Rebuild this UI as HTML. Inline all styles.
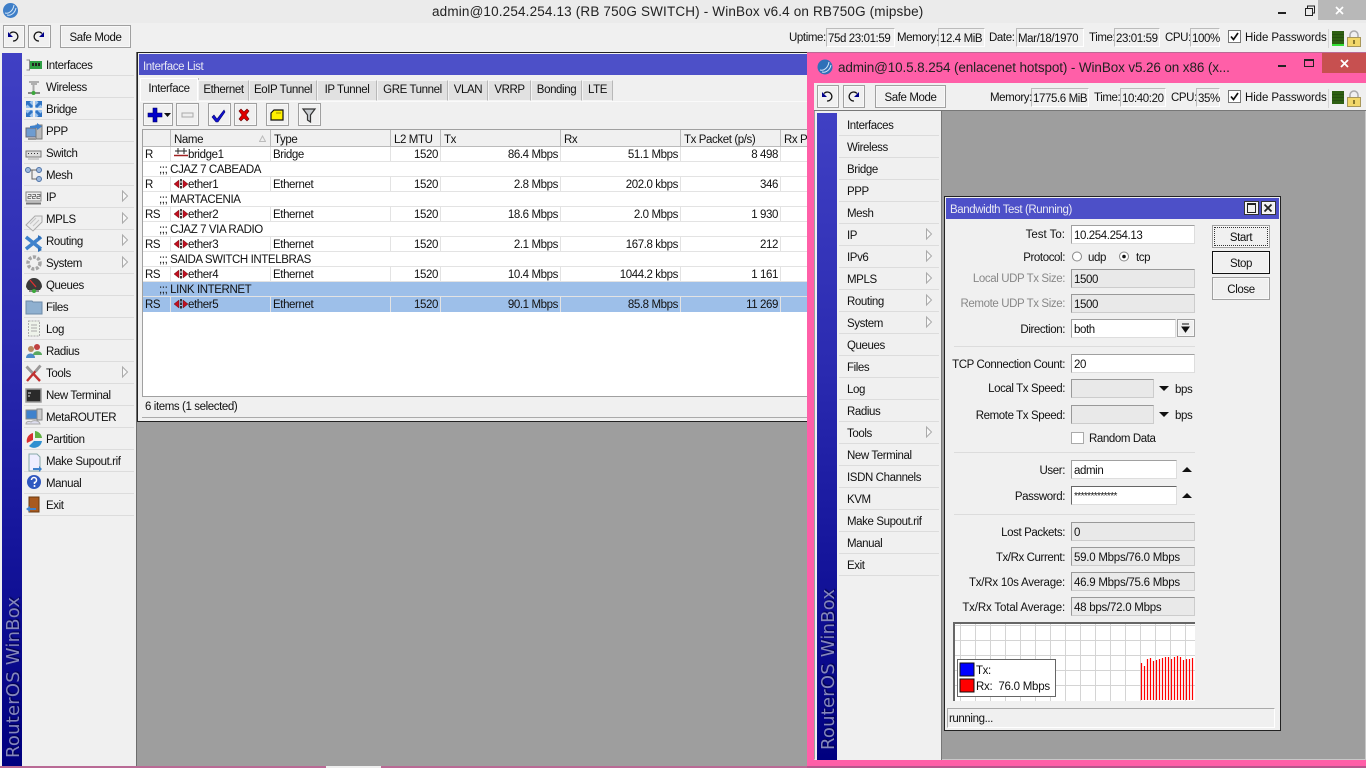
<!DOCTYPE html>
<html><head><meta charset="utf-8"><title>WinBox</title>
<style>
html,body{margin:0;padding:0;width:1366px;height:768px;overflow:hidden;background:#9e9e9e}
body{position:relative;font:11.5px/16px "Liberation Sans",sans-serif;color:#111;letter-spacing:-.4px}
div,svg{position:absolute}
.t{white-space:nowrap;height:14px}
.r{text-align:right}
.b{box-sizing:border-box;background:#f0f0f0;border:1px solid #a0a0a0;text-align:center;white-space:nowrap;box-shadow:inset 0 0 0 1px #f8f8f8}
.f{box-sizing:border-box;background:#f0f0f0;border:1px solid #fff;border-top-color:#bbb;border-left-color:#bbb;height:19px;padding:2px 1px;white-space:nowrap}
.i{box-sizing:border-box;background:#fff;border:1px solid #a0a0a0;border-right-color:#ddd;border-bottom-color:#ddd;height:19px;padding:2px 2px;white-space:nowrap}
.d{box-sizing:border-box;background:#e9e9e9;border:1px solid #999;border-right-color:#ccc;border-bottom-color:#ccc;height:19px;padding:2px 2px;white-space:nowrap}
.s{height:1px;background:#dcdcdc}
.g{color:#888}
.tab{box-sizing:border-box;background:#e1e1e1;border:1px solid #f4f4f4;border-right-color:#b8b8b8;top:80px;height:21px;text-align:center;padding-top:1px;white-space:nowrap}
.h{top:130px;height:17px;box-sizing:border-box;background:#f0f0f0;border-right:1px solid #bbb;padding:2px 3px;white-space:nowrap}
.c{height:14px;white-space:nowrap}
.ln{left:143px;width:664px;height:1px;background:#e3e3e3}
.v{top:147px;height:165px;width:1px;background:#e3e3e3}
.w{font-size:13.5px;letter-spacing:.16px;color:#222;line-height:18px;white-space:nowrap}
.rb{font:18px/20px "DejaVu Sans",sans-serif;color:#8486bc;letter-spacing:.2px;text-shadow:1px 1px 1px #00004a;white-space:nowrap;transform:rotate(-90deg);transform-origin:0 0}
</style></head><body>

<!-- main title bar -->
<div style="left:0;top:0;width:1366px;height:23px;background:#ebebeb;border-bottom:1px solid #d8d8d8"></div>
<svg style="left:2px;top:2px" width="17" height="17" viewBox="0 0 17 17"><circle cx="8.5" cy="8.5" r="7.5" fill="#3f7fc8"/><path d="M3 11C7 12 11 9 12 3M5 13C9 14 13 11 14 6" stroke="#d5e7f7" fill="none"/></svg>
<div class="w" style="left:432px;top:3px">admin@10.254.254.13 (RB 750G SWITCH) - WinBox v6.4 on RB750G (mipsbe)</div>
<div style="left:1318px;top:0;width:48px;height:20px;background:#b8b8b8"></div>
<svg style="left:1278px;top:5px" width="84" height="12" viewBox="0 0 84 12"><rect x="0" y="7" width="8" height="2" fill="#222"/><path d="M27.5 3.5h7v7h-7z M29.5 3v-2h7v7h-2" stroke="#222" fill="none"/><path d="M58 2l7 7M65 2l-7 7" stroke="#fff" stroke-width="1.7"/></svg>

<!-- main toolbar -->
<div style="left:0;top:23px;width:1366px;height:29px;background:#f0f0f0"></div>
<div class="b" style="left:3px;top:25px;width:22px;height:23px"></div>
<div class="b" style="left:28px;top:25px;width:23px;height:23px"></div>
<svg style="left:7px;top:30px" width="40" height="13" viewBox="0 0 40 13"><path d="M3 3.500A4.500 4.500 0 1 1 6 11" stroke="#111" stroke-width="1.300" fill="none"/><path d="M1 2v5h5z" fill="#00008a"/><path d="M35 3.500A4.500 4.500 0 1 0 32 11" stroke="#111" stroke-width="1.300" fill="none"/><path d="M37 2v5h-5z" fill="#00008a"/></svg>
<div class="b" style="left:60px;top:25px;width:71px;height:23px;padding-top:4px">Safe Mode</div>
<div class="f" style="left:826px;top:28px;width:69px">75d 23:01:59</div><div class="t" style="left:789px;top:30px">Uptime:</div>
<div class="f" style="left:938px;top:28px;width:47px">12.4 MiB</div><div class="t" style="left:897px;top:30px">Memory:</div>
<div class="t" style="left:989px;top:30px">Date:</div><div class="f" style="left:1016px;top:28px;width:68px">Mar/18/1970</div>
<div class="t" style="left:1089px;top:30px">Time:</div><div class="f" style="left:1114px;top:28px;width:46px">23:01:59</div>
<div class="t" style="left:1165px;top:30px">CPU:</div><div class="f" style="left:1190px;top:28px;width:30px">100%</div>
<svg style="left:1228px;top:30px" width="13" height="13" viewBox="0 0 13 13"><rect x=".5" y=".5" width="12" height="12" fill="#fff" stroke="#777"/><path d="M3 6.500l2.500 3L10 3" stroke="#111" stroke-width="1.700" fill="none"/></svg>
<div class="t" style="left:1245px;top:30px;letter-spacing:-.1px">Hide Passwords</div>
<div style="left:1328px;top:29px;width:1px;height:19px;background:#d5d5d5"></div>
<svg style="left:1332px;top:30px" width="30" height="17" viewBox="0 0 30 17"><rect x="0" y="1" width="12" height="13" fill="#2e5f12"/><path d="M0 4.500h12M0 7.500h12M0 10.500h12" stroke="#264f10"/><rect x="0" y="14" width="12" height="2" fill="#35e035"/><path d="M18 8V5a4 4 0 0 1 8 0v3" stroke="#a9a9a9" stroke-width="1.500" fill="none"/><rect x="15.500" y="7.500" width="13" height="9" fill="#f2d76a" stroke="#a8975a"/><rect x="21" y="10" width="2" height="4" fill="#8a7a30"/></svg>

<!-- main sidebar -->
<div style="left:0;top:52px;width:137px;height:714px;background:#f0f0f0"></div>
<div style="left:2px;top:53px;width:20px;height:713px;background:linear-gradient(#4040c4,#2a2ab0 40%,#14149a 70%,#00007f)"></div>
<div style="left:136px;top:52px;width:1px;height:714px;background:#6d6d6d"></div>
<div class="rb" style="left:4px;top:758px">RouterOS WinBox</div>
<div style="left:0;top:766px;width:807px;height:2px;background:#b96a95"></div>
<div style="left:326px;top:766px;width:55px;height:2px;background:#eee"></div>

<div class="t" style="left:46px;top:58px">Interfaces</div>
<div class="t" style="left:46px;top:80px">Wireless</div>
<div class="t" style="left:46px;top:102px">Bridge</div>
<div class="t" style="left:46px;top:124px">PPP</div>
<div class="t" style="left:46px;top:146px">Switch</div>
<div class="t" style="left:46px;top:168px">Mesh</div>
<div class="t" style="left:46px;top:190px">IP</div>
<div class="t" style="left:46px;top:212px">MPLS</div>
<div class="t" style="left:46px;top:234px">Routing</div>
<div class="t" style="left:46px;top:256px">System</div>
<div class="t" style="left:46px;top:278px">Queues</div>
<div class="t" style="left:46px;top:300px">Files</div>
<div class="t" style="left:46px;top:322px">Log</div>
<div class="t" style="left:46px;top:344px">Radius</div>
<div class="t" style="left:46px;top:366px">Tools</div>
<div class="t" style="left:46px;top:388px">New Terminal</div>
<div class="t" style="left:46px;top:410px">MetaROUTER</div>
<div class="t" style="left:46px;top:432px">Partition</div>
<div class="t" style="left:46px;top:454px">Make Supout.rif</div>
<div class="t" style="left:46px;top:476px">Manual</div>
<div class="t" style="left:46px;top:498px">Exit</div>
<div class="s" style="left:24px;top:75px;width:110px"></div><div class="s" style="left:24px;top:97px;width:110px"></div><div class="s" style="left:24px;top:119px;width:110px"></div><div class="s" style="left:24px;top:141px;width:110px"></div><div class="s" style="left:24px;top:163px;width:110px"></div><div class="s" style="left:24px;top:185px;width:110px"></div><div class="s" style="left:24px;top:207px;width:110px"></div><div class="s" style="left:24px;top:229px;width:110px"></div><div class="s" style="left:24px;top:251px;width:110px"></div><div class="s" style="left:24px;top:273px;width:110px"></div><div class="s" style="left:24px;top:295px;width:110px"></div><div class="s" style="left:24px;top:317px;width:110px"></div><div class="s" style="left:24px;top:339px;width:110px"></div><div class="s" style="left:24px;top:361px;width:110px"></div><div class="s" style="left:24px;top:383px;width:110px"></div><div class="s" style="left:24px;top:405px;width:110px"></div><div class="s" style="left:24px;top:427px;width:110px"></div><div class="s" style="left:24px;top:449px;width:110px"></div><div class="s" style="left:24px;top:471px;width:110px"></div><div class="s" style="left:24px;top:493px;width:110px"></div><div class="s" style="left:24px;top:515px;width:110px"></div>

<!-- main menu icons -->
<svg style="left:25px;top:55px" width="18" height="460" viewBox="0 0 18 460">
<!-- interfaces -->
<path d="M1.500 5h3v10h-3" stroke="#8a8a8a" fill="none"/><rect x="5" y="6" width="12" height="8" fill="#2f9f45"/><path d="M7 8h2v3H7zM10 8h2v3h-2zM13 8h2v3h-2z" fill="#222"/>
<!-- wireless -->
<path d="M4 27h10M6 29h6" stroke="#999" stroke-width="1.500"/><path d="M8.500 30v7" stroke="#aaa" stroke-width="2"/><path d="M3 38h12" stroke="#666" stroke-width="1.500"/><circle cx="8.500" cy="38" r="2" fill="#3aa83a"/>
<!-- bridge -->
<path d="M1 46h7v7H1zM10 46h7v7h-7zM1 55h7v7H1zM10 55h7v7h-7z" fill="#9cc4ee"/><path d="M1 46h5l-1.500 1.500L8 51l-2 2-3.500-3.500L1 51zM17 46h-5l1.500 1.500L10 51l2 2 3.500-3.500L17 51zM1 62h5l-1.500-1.500L8 57l-2-2-3.500 3.500L1 57zM17 62h-5l1.500-1.500L10 57l2-2 3.500 3.500L17 57z" fill="#2f74c4"/>
<!-- ppp -->
<rect x="1" y="73" width="11" height="9" fill="#6e9cd0" stroke="#667"/><rect x="11" y="70" width="6" height="14" fill="#bbb" stroke="#777"/><path d="M5 71l7-1v-2l5 3.500-5 3.500v-2H5z" fill="#3f82cc"/><rect x="3" y="83" width="8" height="2" fill="#999"/>
<!-- switch -->
<rect x="1" y="96" width="15" height="6" fill="#ddd" stroke="#777"/><path d="M3 98.500h1M6 98.500h1M9 98.500h1M12 98.500h1" stroke="#333"/><path d="M3 104h11" stroke="#aaa"/>
<!-- mesh -->
<circle cx="3" cy="115" r="2.500" fill="#9db9dd" stroke="#4d72a8"/><circle cx="14" cy="115" r="2.500" fill="#9db9dd" stroke="#4d72a8"/><circle cx="14" cy="124" r="2.500" fill="#9db9dd" stroke="#4d72a8"/><path d="M5 115h7M7 115v9h5" stroke="#666" fill="none"/>
<!-- ip -->
<rect x="1" y="137" width="15" height="9" fill="#eee" stroke="#888"/><path d="M1 148.500h15" stroke="#777" stroke-width="2"/><path d="M3 139.500h3v2h-3v2h3M7.500 139.500h3v2h-3v2h3M12 139.500h3v2h-3v2h3" stroke="#555" fill="none" stroke-width=".8"/>
<!-- mpls -->
<path d="M1 170l9-9h7v6l-9 9z" fill="#ececec" stroke="#aaa"/><path d="M5 169l6-6M8 171l6-6" stroke="#c4c4c4"/>
<!-- routing -->
<path d="M1 182l15 12M1 194l15-12" stroke="#3f82cc" stroke-width="3.500"/><path d="M13 180l4 3-4 2zM13 192l4 3-4 2z" fill="#2e6fb8"/>
<!-- system -->
<circle cx="9" cy="208" r="6" fill="none" stroke="#a5a5a5" stroke-width="3.500" stroke-dasharray="3 1.500"/>
<!-- queues -->
<path d="M1 232a8 9 0 0 1 16 0l-2 3H3z" fill="#3a3a3a"/><path d="M5 225l6 7" stroke="#e03030" stroke-width="1.300"/><path d="M4 236h10" stroke="#666" stroke-width="1.500"/><circle cx="9" cy="236" r="2" fill="#3aa83a"/>
<!-- files -->
<path d="M1 246h6l1 1h9v12H1z" fill="#8fb0d0" stroke="#6d8aa8"/>
<!-- log -->
<rect x="3.500" y="266" width="11" height="15" fill="#eef3ea" stroke="#aaa" stroke-dasharray="2 1"/><path d="M6 270h6M6 273h6M6 276h6" stroke="#aaa"/>
<!-- radius -->
<circle cx="6" cy="294" r="3" fill="#b88a60"/><path d="M1 303c0-6 9-6 9 0z" fill="#4d8ac8"/><circle cx="12" cy="292" r="3" fill="#c04040"/><path d="M8 300c0-5 9-5 9 0z" fill="#5aa860"/>
<!-- tools -->
<path d="M2 312l13 14" stroke="#c03030" stroke-width="2.400"/><path d="M15 311l-13 15" stroke="#c03030" stroke-width="2.400"/><path d="M1.500 311.500l6 6.500M15.500 310.500l-5 6" stroke="#999" stroke-width="2.800"/>
<!-- terminal -->
<rect x="1" y="334" width="15" height="13" fill="#2a2a2a" stroke="#999" stroke-width="1.500"/><path d="M3 338h3M3 341h2" stroke="#ddd"/>
<!-- metarouter -->
<rect x="1" y="355" width="11" height="9" fill="#3f82cc" stroke="#888"/><rect x="12" y="354" width="5" height="11" fill="#ccc" stroke="#888"/><path d="M1 369c0-3 4-3 5-2 2-2 8-2 9 2z" fill="#dde" stroke="#aaa"/>
<!-- partition -->
<path d="M8 378v7l-6 3a8 8 0 0 1 6-10z" fill="#d83030"/><path d="M10 376a8 8 0 0 1 7 7h-7z" fill="#60b040"/><path d="M9 386h8a8 8 0 0 1-13 5z" fill="#3090d0"/>
<!-- supout -->
<path d="M4 399h8l3 3v14H4z" fill="#eef" stroke="#8aa"/><path d="M8 413h6v-2l3 3-3 3v-2H8z" fill="#3f82cc"/>
<!-- manual -->
<circle cx="9" cy="427" r="7" fill="#2f58c0"/><path d="M6.500 425a2.500 2.500 0 1 1 3 2.500v1.500" stroke="#fff" stroke-width="1.500" fill="none"/><circle cx="9.500" cy="431" r="1" fill="#fff"/>
<!-- exit -->
<rect x="4" y="442" width="10" height="15" fill="#a85a20" stroke="#6a3a10"/><path d="M1 454l4-3v2h6v2H5v2z" fill="#3f82cc"/>
</svg>
<svg style="left:121px;top:190px" width="9" height="190" viewBox="0 0 9 190"><path d="M1.500 1v10l5-5zM1.500 23v10l5-5zM1.500 45v10l5-5zM1.500 67v10l5-5zM1.500 177v10l5-5z" fill="#f8f8f8" stroke="#aaa"/></svg>

<!-- interface list -->
<div style="left:137px;top:52px;width:672px;height:370px;background:#f0f0f0;border:1px solid #222;box-sizing:border-box"></div>
<div style="left:139px;top:54px;width:668px;height:21px;background:#4d50c8"></div>
<div class="t" style="left:143px;top:59px;color:#e8e8f4">Interface List</div>
<div style="left:140px;top:78px;width:58px;height:24px;background:#f0f0f0;border:1px solid #fff;border-bottom:0;box-sizing:border-box;text-align:center;padding-top:2px;box-shadow:1px 0 0 #bbb">Interface</div>
<div class="tab" style="left:198px;width:51px">Ethernet</div>
<div class="tab" style="left:249px;width:68px">EoIP Tunnel</div>
<div class="tab" style="left:317px;width:60px">IP Tunnel</div>
<div class="tab" style="left:377px;width:71px">GRE Tunnel</div>
<div class="tab" style="left:448px;width:40px">VLAN</div>
<div class="tab" style="left:488px;width:43px">VRRP</div>
<div class="tab" style="left:531px;width:51px">Bonding</div>
<div class="tab" style="left:582px;width:31px">LTE</div>
<div style="left:140px;top:101px;width:667px;height:1px;background:#fafafa"></div>
<div class="b" style="left:143px;top:103px;width:30px;height:23px"></div>
<div class="b" style="left:176px;top:103px;width:23px;height:23px"></div>
<div class="b" style="left:208px;top:103px;width:23px;height:23px"></div>
<div class="b" style="left:234px;top:103px;width:23px;height:23px"></div>
<div class="b" style="left:266px;top:103px;width:23px;height:23px"></div>
<div class="b" style="left:298px;top:103px;width:23px;height:23px"></div>
<svg style="left:143px;top:103px" width="180" height="24" viewBox="0 0 180 24">
<path d="M10 5h4v5h5v4h-5v5h-4v-5H5v-4h5z" fill="#0000c8" stroke="#00005a" stroke-width=".6"/><path d="M21 10h7l-3.500 4z" fill="#111"/>
<rect x="39" y="10" width="11" height="4" fill="#eee" stroke="#aaa"/>
<path d="M71 12l3 4 7-9 1 2-7 10h-2l-4-5z" fill="#1010d0" stroke="#00006a" stroke-width=".6"/>
<path d="M96 8l2-2 3 3 3-3 2 2-3 4 3 4-2 2-3-3-3 3-2-2 3-4z" fill="#e00000" stroke="#600" stroke-width=".6"/>
<path d="M128 10l3-3h9v10h-12z" fill="#fff000" stroke="#111" stroke-width="1.200"/><path d="M133 10h5" stroke="#a09000"/>
<path d="M160 6h12l-4.500 6v7l-3-2v-5z" fill="#c8ccd0" stroke="#333" stroke-width="1.200"/>
</svg>

<!-- table -->
<div style="left:142px;top:129px;width:665px;height:268px;background:#fff;border:1px solid #a0a0a0;border-right:0;box-sizing:border-box"></div>
<div style="left:143px;top:297px;width:664px;height:15px;background:#9dbfe9"></div>
<div class="h" style="left:143px;width:28px"></div>
<div class="h" style="left:171px;width:100px">Name</div>
<div class="h" style="left:271px;width:120px">Type</div>
<div class="h" style="left:391px;width:50px">L2 MTU</div>
<div class="h" style="left:441px;width:120px">Tx</div>
<div class="h" style="left:561px;width:120px">Rx</div>
<div class="h" style="left:681px;width:100px">Tx Packet (p/s)</div>
<div class="h" style="left:781px;width:26px;overflow:hidden;border:0">Rx Pack</div>
<svg style="left:259px;top:135px" width="7" height="7"><path d="M.5 6.500L3.500 1l3 5.500z" fill="#eee" stroke="#bbb"/></svg>
<div class="v" style="left:170px"></div><div class="v" style="left:270px"></div><div class="v" style="left:390px"></div><div class="v" style="left:440px"></div><div class="v" style="left:560px"></div><div class="v" style="left:680px"></div><div class="v" style="left:780px"></div>
<div class="ln" style="top:146px;background:#bbb"></div><div class="ln" style="top:161px"></div><div class="ln" style="top:176px"></div><div class="ln" style="top:191px"></div><div class="ln" style="top:206px"></div><div class="ln" style="top:221px"></div><div class="ln" style="top:236px"></div><div class="ln" style="top:251px"></div><div class="ln" style="top:266px"></div><div class="ln" style="top:281px"></div><div class="ln" style="top:296px"></div>
<div style="left:143px;top:162px;width:664px;height:14px;background:#fff"></div>
<div style="left:143px;top:192px;width:664px;height:14px;background:#fff"></div>
<div style="left:143px;top:222px;width:664px;height:14px;background:#fff"></div>
<div style="left:143px;top:252px;width:664px;height:14px;background:#fff"></div>
<div style="left:143px;top:282px;width:664px;height:14px;background:#9dbfe9"></div>

<div class="c" style="left:145px;top:147px">R</div><div class="c" style="left:188px;top:147px">bridge1</div><div class="c" style="left:273px;top:147px">Bridge</div><div class="c r" style="left:391px;top:147px;width:47px">1520</div><div class="c r" style="left:441px;top:147px;width:117px">86.4 Mbps</div><div class="c r" style="left:561px;top:147px;width:117px">51.1 Mbps</div><div class="c r" style="left:681px;top:147px;width:97px">8 498</div>
<div class="c" style="left:159px;top:162px">;;; CJAZ 7 CABEADA</div>
<div class="c" style="left:145px;top:177px">R</div><div class="c" style="left:188px;top:177px">ether1</div><div class="c" style="left:273px;top:177px">Ethernet</div><div class="c r" style="left:391px;top:177px;width:47px">1520</div><div class="c r" style="left:441px;top:177px;width:117px">2.8 Mbps</div><div class="c r" style="left:561px;top:177px;width:117px">202.0 kbps</div><div class="c r" style="left:681px;top:177px;width:97px">346</div>
<div class="c" style="left:159px;top:192px">;;; MARTACENIA</div>
<div class="c" style="left:145px;top:207px">RS</div><div class="c" style="left:188px;top:207px">ether2</div><div class="c" style="left:273px;top:207px">Ethernet</div><div class="c r" style="left:391px;top:207px;width:47px">1520</div><div class="c r" style="left:441px;top:207px;width:117px">18.6 Mbps</div><div class="c r" style="left:561px;top:207px;width:117px">2.0 Mbps</div><div class="c r" style="left:681px;top:207px;width:97px">1 930</div>
<div class="c" style="left:159px;top:222px">;;; CJAZ 7 VIA RADIO</div>
<div class="c" style="left:145px;top:237px">RS</div><div class="c" style="left:188px;top:237px">ether3</div><div class="c" style="left:273px;top:237px">Ethernet</div><div class="c r" style="left:391px;top:237px;width:47px">1520</div><div class="c r" style="left:441px;top:237px;width:117px">2.1 Mbps</div><div class="c r" style="left:561px;top:237px;width:117px">167.8 kbps</div><div class="c r" style="left:681px;top:237px;width:97px">212</div>
<div class="c" style="left:159px;top:252px">;;; SAIDA SWITCH INTELBRAS</div>
<div class="c" style="left:145px;top:267px">RS</div><div class="c" style="left:188px;top:267px">ether4</div><div class="c" style="left:273px;top:267px">Ethernet</div><div class="c r" style="left:391px;top:267px;width:47px">1520</div><div class="c r" style="left:441px;top:267px;width:117px">10.4 Mbps</div><div class="c r" style="left:561px;top:267px;width:117px">1044.2 kbps</div><div class="c r" style="left:681px;top:267px;width:97px">1 161</div>
<div class="c" style="left:159px;top:282px">;;; LINK INTERNET</div>
<div class="c" style="left:145px;top:297px">RS</div><div class="c" style="left:188px;top:297px">ether5</div><div class="c" style="left:273px;top:297px">Ethernet</div><div class="c r" style="left:391px;top:297px;width:47px">1520</div><div class="c r" style="left:441px;top:297px;width:117px">90.1 Mbps</div><div class="c r" style="left:561px;top:297px;width:117px">85.8 Mbps</div><div class="c r" style="left:681px;top:297px;width:97px">11 269</div>
<svg style="left:174px;top:148px" width="14" height="165" viewBox="0 0 14 165">
<path d="M1 3h12M4 0v6M10 0v6" stroke="#222" fill="none"/><path d="M0 7.500h14" stroke="#a02020" stroke-width="1.500"/>
<path d="M0 36l5-4v8zM14 36l-5-4v8z" fill="#c01020" stroke="#500" stroke-width=".4"/><path d="M7 31v10" stroke="#222" stroke-width="1.800" stroke-dasharray="2.500 1"/>
<path d="M0 66l5-4v8zM14 66l-5-4v8z" fill="#c01020" stroke="#500" stroke-width=".4"/><path d="M7 61v10" stroke="#222" stroke-width="1.800" stroke-dasharray="2.500 1"/>
<path d="M0 96l5-4v8zM14 96l-5-4v8z" fill="#c01020" stroke="#500" stroke-width=".4"/><path d="M7 91v10" stroke="#222" stroke-width="1.800" stroke-dasharray="2.500 1"/>
<path d="M0 126l5-4v8zM14 126l-5-4v8z" fill="#c01020" stroke="#500" stroke-width=".4"/><path d="M7 121v10" stroke="#222" stroke-width="1.800" stroke-dasharray="2.500 1"/>
<path d="M0 156l5-4v8zM14 156l-5-4v8z" fill="#c01020" stroke="#500" stroke-width=".4"/><path d="M7 151v10" stroke="#222" stroke-width="1.800" stroke-dasharray="2.500 1"/>
</svg>
<div style="left:142px;top:396px;width:665px;height:1px;background:#a0a0a0"></div>
<div class="t" style="left:145px;top:399px">6 items (1 selected)</div>
<div style="left:142px;top:417px;width:665px;height:1px;background:#aaa"></div>

<!-- second winbox -->
<div style="left:807px;top:52px;width:559px;height:716px;background:#ff5fa8"></div>
<div style="left:807px;top:52px;width:559px;height:1px;background:#b96a95"></div>
<svg style="left:817px;top:59px" width="16" height="16" viewBox="0 0 16 16"><circle cx="8" cy="8" r="7.500" fill="#2f70b8"/><path d="M3 11C7 12 11 9 12 3M5 13C9 14 13 11 14 6" stroke="#d5e7f7" fill="none"/></svg>
<div class="w" style="left:838px;top:59px;letter-spacing:-.12px">admin@10.5.8.254 (enlacenet hotspot) - WinBox v5.26 on x86 (x...</div>
<div style="left:1322px;top:53px;width:44px;height:20px;background:#c75050"></div>
<svg style="left:1278px;top:57px" width="84" height="14" viewBox="0 0 84 14"><rect x="0" y="8" width="8" height="2" fill="#222"/><rect x="26.500" y="2.500" width="9" height="7" fill="none" stroke="#222"/><rect x="26" y="2" width="10" height="2" fill="#222"/><path d="M63 3l7 7M70 3l-7 7" stroke="#fff" stroke-width="1.800"/></svg>

<div style="left:814px;top:83px;width:552px;height:28px;background:#f0f0f0"></div>
<div class="b" style="left:817px;top:85px;width:22px;height:23px"></div>
<div class="b" style="left:843px;top:85px;width:22px;height:23px"></div>
<svg style="left:821px;top:90px" width="40" height="13" viewBox="0 0 40 13"><path d="M3 3.500A4.500 4.500 0 1 1 6 11" stroke="#111" stroke-width="1.300" fill="none"/><path d="M1 2v5h5z" fill="#00008a"/><path d="M36 3.500A4.500 4.500 0 1 0 33 11" stroke="#111" stroke-width="1.300" fill="none"/><path d="M38 2v5h-5z" fill="#00008a"/></svg>
<div class="b" style="left:875px;top:85px;width:71px;height:23px;padding-top:4px">Safe Mode</div>
<div class="f" style="left:1031px;top:88px;width:58px">1775.6 MiB</div><div class="t" style="left:990px;top:90px">Memory:</div>
<div class="t" style="left:1094px;top:90px">Time:</div><div class="f" style="left:1120px;top:88px;width:46px">10:40:20</div>
<div class="t" style="left:1171px;top:90px">CPU:</div><div class="f" style="left:1196px;top:88px;width:24px">35%</div>
<svg style="left:1228px;top:90px" width="13" height="13" viewBox="0 0 13 13"><rect x=".5" y=".5" width="12" height="12" fill="#fff" stroke="#777"/><path d="M3 6.500l2.500 3L10 3" stroke="#111" stroke-width="1.700" fill="none"/></svg>
<div class="t" style="left:1245px;top:90px;letter-spacing:-.1px">Hide Passwords</div>
<div style="left:1328px;top:89px;width:1px;height:19px;background:#d5d5d5"></div>
<svg style="left:1332px;top:89px" width="30" height="18" viewBox="0 0 30 18"><rect x="0" y="2" width="12" height="13" fill="#2e5f12"/><path d="M0 5.500h12M0 8.500h12M0 11.500h12" stroke="#264f10"/><path d="M18 9V6a4 4 0 0 1 8 0v3" stroke="#a9a9a9" stroke-width="1.500" fill="none"/><rect x="15.500" y="8.500" width="13" height="9" fill="#f2d76a" stroke="#a8975a"/><rect x="21" y="11" width="2" height="4" fill="#8a7a30"/></svg>
<div style="left:814px;top:110px;width:552px;height:1px;background:#777"></div>

<div style="left:814px;top:111px;width:552px;height:649px;background:#9e9e9e"></div>
<div style="left:1365px;top:111px;width:1px;height:649px;background:#c8c8c8"></div>
<div style="left:814px;top:759px;width:552px;height:1px;background:#c8c8c8"></div>
<div style="left:815px;top:111px;width:126px;height:649px;background:#f0f0f0"></div>
<div style="left:941px;top:111px;width:1px;height:649px;background:#777"></div>
<div style="left:817px;top:113px;width:20px;height:647px;background:linear-gradient(#4040c4,#2a2ab0 40%,#14149a 70%,#00007f)"></div>
<div class="rb" style="left:819px;top:750px">RouterOS WinBox</div>
<div style="left:807px;top:766px;width:559px;height:2px;background:#b8568d"></div>

<div class="t" style="left:847px;top:118px">Interfaces</div>
<div class="t" style="left:847px;top:140px">Wireless</div>
<div class="t" style="left:847px;top:162px">Bridge</div>
<div class="t" style="left:847px;top:184px">PPP</div>
<div class="t" style="left:847px;top:206px">Mesh</div>
<div class="t" style="left:847px;top:228px">IP</div>
<div class="t" style="left:847px;top:250px">IPv6</div>
<div class="t" style="left:847px;top:272px">MPLS</div>
<div class="t" style="left:847px;top:294px">Routing</div>
<div class="t" style="left:847px;top:316px">System</div>
<div class="t" style="left:847px;top:338px">Queues</div>
<div class="t" style="left:847px;top:360px">Files</div>
<div class="t" style="left:847px;top:382px">Log</div>
<div class="t" style="left:847px;top:404px">Radius</div>
<div class="t" style="left:847px;top:426px">Tools</div>
<div class="t" style="left:847px;top:448px">New Terminal</div>
<div class="t" style="left:847px;top:470px">ISDN Channels</div>
<div class="t" style="left:847px;top:492px">KVM</div>
<div class="t" style="left:847px;top:514px">Make Supout.rif</div>
<div class="t" style="left:847px;top:536px">Manual</div>
<div class="t" style="left:847px;top:558px">Exit</div>
<div class="s" style="left:839px;top:135px;width:100px"></div><div class="s" style="left:839px;top:157px;width:100px"></div><div class="s" style="left:839px;top:179px;width:100px"></div><div class="s" style="left:839px;top:201px;width:100px"></div><div class="s" style="left:839px;top:223px;width:100px"></div><div class="s" style="left:839px;top:245px;width:100px"></div><div class="s" style="left:839px;top:267px;width:100px"></div><div class="s" style="left:839px;top:289px;width:100px"></div><div class="s" style="left:839px;top:311px;width:100px"></div><div class="s" style="left:839px;top:333px;width:100px"></div><div class="s" style="left:839px;top:355px;width:100px"></div><div class="s" style="left:839px;top:377px;width:100px"></div><div class="s" style="left:839px;top:399px;width:100px"></div><div class="s" style="left:839px;top:421px;width:100px"></div><div class="s" style="left:839px;top:443px;width:100px"></div><div class="s" style="left:839px;top:465px;width:100px"></div><div class="s" style="left:839px;top:487px;width:100px"></div><div class="s" style="left:839px;top:509px;width:100px"></div><div class="s" style="left:839px;top:531px;width:100px"></div><div class="s" style="left:839px;top:553px;width:100px"></div><div class="s" style="left:839px;top:575px;width:100px"></div>
<svg style="left:925px;top:228px" width="9" height="210" viewBox="0 0 9 210"><path d="M1.500 1v10l5-5zM1.500 23v10l5-5zM1.500 45v10l5-5zM1.500 67v10l5-5zM1.500 89v10l5-5zM1.500 199v10l5-5z" fill="#f8f8f8" stroke="#aaa"/></svg>

<!-- bandwidth test -->
<div style="left:944px;top:196px;width:337px;height:535px;background:#f0f0f0;border:1px solid #222;box-sizing:border-box"></div>
<div style="left:946px;top:198px;width:333px;height:21px;background:#4d50c8"></div>
<div class="t" style="left:950px;top:202px;color:#e8e8f4">Bandwidth Test (Running)</div>
<div class="b" style="left:1244px;top:201px;width:15px;height:14px;border-color:#333"></div>
<div class="b" style="left:1261px;top:201px;width:15px;height:14px;border-color:#333"></div>
<svg style="left:1244px;top:201px" width="32" height="14" viewBox="0 0 32 14"><rect x="3.500" y="2.500" width="8" height="9" fill="none" stroke="#222"/><rect x="3" y="2" width="9" height="2" fill="#222"/><path d="M20.500 3.500l7 7M27.500 3.500l-7 7" stroke="#222" stroke-width="1.800"/></svg>

<div class="t r" style="left:946px;top:227px;width:119px;letter-spacing:0">Test To:</div><div class="i" style="left:1071px;top:225px;width:124px">10.254.254.13</div>
<div class="t r" style="left:946px;top:250px;width:119px">Protocol:</div>
<svg style="left:1071px;top:250px" width="60" height="14" viewBox="0 0 60 14"><circle cx="6" cy="6.500" r="4.500" fill="#fff" stroke="#888"/><circle cx="53" cy="6.500" r="4.500" fill="#fff" stroke="#888"/><circle cx="53" cy="6.500" r="1.800" fill="#111"/></svg>
<div class="t" style="left:1088px;top:250px">udp</div><div class="t" style="left:1136px;top:250px">tcp</div>
<div class="t r g" style="left:946px;top:271px;width:119px">Local UDP Tx Size:</div><div class="d" style="left:1071px;top:269px;width:124px">1500</div>
<div class="t r g" style="left:946px;top:296px;width:119px">Remote UDP Tx Size:</div><div class="d" style="left:1071px;top:294px;width:124px">1500</div>
<div class="t r" style="left:946px;top:322px;width:119px">Direction:</div><div class="i" style="left:1071px;top:319px;width:105px">both</div>
<div class="b" style="left:1177px;top:319px;width:18px;height:18px"></div>
<svg style="left:1181px;top:323px" width="10" height="10" viewBox="0 0 10 10"><path d="M1 1h7M1 4h7l-3.500 5z" stroke="#111" fill="#111"/></svg>
<div class="s" style="left:954px;top:346px;width:241px"></div>
<div class="t r" style="left:946px;top:357px;width:119px">TCP Connection Count:</div><div class="i" style="left:1071px;top:354px;width:124px">20</div>
<div class="t r" style="left:946px;top:381px;width:119px">Local Tx Speed:</div><div class="d" style="left:1071px;top:379px;width:83px"></div>
<svg style="left:1158px;top:385px" width="12" height="7"><path d="M1 1h10l-5 5z" fill="#111"/></svg><div class="t" style="left:1175px;top:382px">bps</div>
<div class="t r" style="left:946px;top:408px;width:119px">Remote Tx Speed:</div><div class="d" style="left:1071px;top:405px;width:83px"></div>
<svg style="left:1158px;top:411px" width="12" height="7"><path d="M1 1h10l-5 5z" fill="#111"/></svg><div class="t" style="left:1175px;top:408px">bps</div>
<div style="left:1071px;top:432px;width:13px;height:12px;box-sizing:border-box;background:#fff;border:1px solid #aaa"></div><div class="t" style="left:1089px;top:431px">Random Data</div>
<div class="s" style="left:954px;top:452px;width:241px"></div>
<div class="t r" style="left:946px;top:463px;width:119px">User:</div><div class="i" style="left:1071px;top:460px;width:106px">admin</div>
<svg style="left:1181px;top:466px" width="12" height="7"><path d="M1 6h10L6 1z" fill="#111"/></svg>
<div class="t r" style="left:946px;top:489px;width:119px">Password:</div><div class="i" style="left:1071px;top:486px;width:106px;border-color:#666 #ddd #ddd #666;letter-spacing:-.6px;font-size:10px">*************</div>
<svg style="left:1181px;top:492px" width="12" height="7"><path d="M1 6h10L6 1z" fill="#111"/></svg>
<div class="s" style="left:954px;top:514px;width:241px"></div>
<div class="t r" style="left:946px;top:525px;width:119px">Lost Packets:</div><div class="d" style="left:1071px;top:522px;width:124px">0</div>
<div class="t r" style="left:946px;top:550px;width:119px">Tx/Rx Current:</div><div class="d" style="left:1071px;top:547px;width:124px;letter-spacing:-.25px">59.0 Mbps/76.0 Mbps</div>
<div class="t r" style="left:946px;top:575px;width:119px;letter-spacing:-.23px">Tx/Rx 10s Average:</div><div class="d" style="left:1071px;top:572px;width:124px;letter-spacing:-.25px">46.9 Mbps/75.6 Mbps</div>
<div class="t r" style="left:946px;top:600px;width:119px;letter-spacing:-.15px">Tx/Rx Total Average:</div><div class="d" style="left:1071px;top:597px;width:124px;letter-spacing:-.25px">48 bps/72.0 Mbps</div>

<div class="b" style="left:1212px;top:225px;width:58px;height:23px;padding-top:4px;outline:1px dotted #333;outline-offset:-3px">Start</div>
<div class="b" style="left:1212px;top:251px;width:58px;height:23px;padding-top:4px;border-color:#111">Stop</div>
<div class="b" style="left:1212px;top:277px;width:58px;height:23px;padding-top:4px">Close</div>

<svg style="left:953px;top:622px" width="242" height="79" viewBox="0 0 242 79">
<rect width="242" height="79" fill="#fff"/>
<path d="M7.500 0v79M22.500 0v79M37.500 0v79M52.500 0v79M67.500 0v79M82.500 0v79M97.500 0v79M112.500 0v79M127.500 0v79M142.500 0v79M157.500 0v79M172.500 0v79M187.500 0v79M202.500 0v79M217.500 0v79M232.500 0v79M0 3.500h242M0 18.500h242M0 33.500h242M0 48.500h242M0 63.500h242" stroke="#d4d4d4"/>
<path d="M1 79V1h241" stroke="#666" stroke-width="2" fill="none"/>
<path d="M188.500 78V41M191.500 78V44M194.500 78V37M197.500 78V36M200.500 78V39M203.500 78V38M206.500 78V37M209.500 78V36M212.500 78V35M215.500 78V35M218.500 78V37M221.500 78V35M224.500 78V34M227.500 78V35M230.500 78V38M233.500 78V37M236.500 78V37M239.500 78V36" stroke="#f00" stroke-width="1.200"/>
<rect x="4.500" y="37.500" width="98" height="37" fill="#fff" stroke="#666"/>
<rect x="7" y="41" width="14" height="13" fill="#0000ff" stroke="#111"/>
<rect x="7" y="57" width="14" height="13" fill="#f00" stroke="#111"/>
</svg>
<div class="t" style="left:976px;top:663px">Tx:</div>
<div class="t" style="left:976px;top:679px;letter-spacing:-.25px">Rx:&nbsp; 76.0 Mbps</div>

<div style="left:947px;top:708px;width:328px;height:20px;background:#f0f0f0;border:1px solid #fff;border-top-color:#aaa;border-left-color:#aaa;box-sizing:border-box"></div>
<div class="t" style="left:949px;top:711px">running...</div>
</body></html>
